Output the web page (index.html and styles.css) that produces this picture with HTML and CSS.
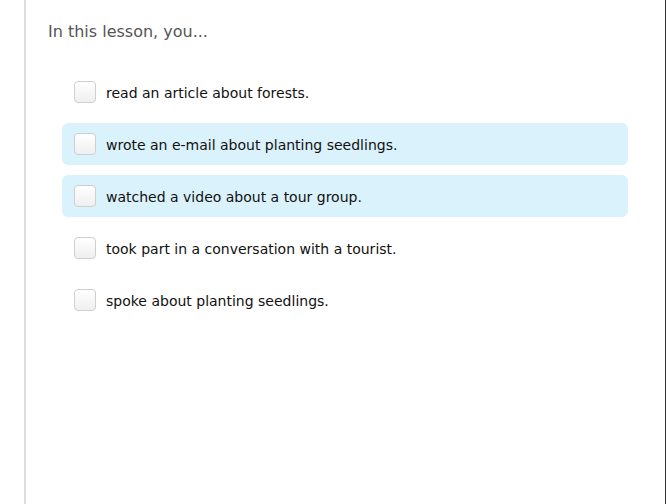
FILE: index.html
```html
<!DOCTYPE html>
<html>
<head>
<meta charset="utf-8">
<link rel="stylesheet" href="styles.css">
</head>
<body>
<div class="panel">
  <h2 class="title">In this lesson, you...</h2>
  <ul class="list">
    <li class="item"><span class="box"></span><span class="label">read an article about forests.</span></li>
    <li class="item hl"><span class="box"></span><span class="label">wrote an e-mail about planting seedlings.</span></li>
    <li class="item hl"><span class="box"></span><span class="label">watched a video about a tour group.</span></li>
    <li class="item"><span class="box"></span><span class="label">took part in a conversation with a tourist.</span></li>
    <li class="item"><span class="box"></span><span class="label">spoke about planting seedlings.</span></li>
  </ul>
</div>
</body>
</html>
```
FILE: styles.css
```css
html, body {
  margin: 0;
  padding: 0;
  background: #fff;
}
body {
  font-family: "DejaVu Sans", Verdana, sans-serif;
}
.panel {
  margin-left: 24px;
  border-left: 2px solid #dcdcdc;
  border-right: 1px solid #333;
  height: 504px;
  box-sizing: border-box;
  padding: 22px 37px 0 22px;
}
.title {
  margin: 0;
  font-size: 16px;
  font-weight: normal;
  color: #555;
  line-height: 20px;
}
.list {
  list-style: none;
  margin: 29px 0 0 14px;
  padding: 0;
  display: flex;
  flex-direction: column;
  gap: 10px;
}
.item {
  display: flex;
  align-items: center;
  height: 42px;
  padding: 0 12px;
  border-radius: 6px;
  box-sizing: border-box;
}
.item.hl {
  background: #daf2fc;
}
.box {
  width: 22px;
  height: 22px;
  box-sizing: border-box;
  border: 1px solid #cfcfcf;
  border-radius: 4px;
  background: linear-gradient(#ffffff, #efefef);
  flex: none;
}
.label {
  margin-left: 10px;
  padding-top: 2px;
  font-size: 14px;
  color: #111;
}
```
